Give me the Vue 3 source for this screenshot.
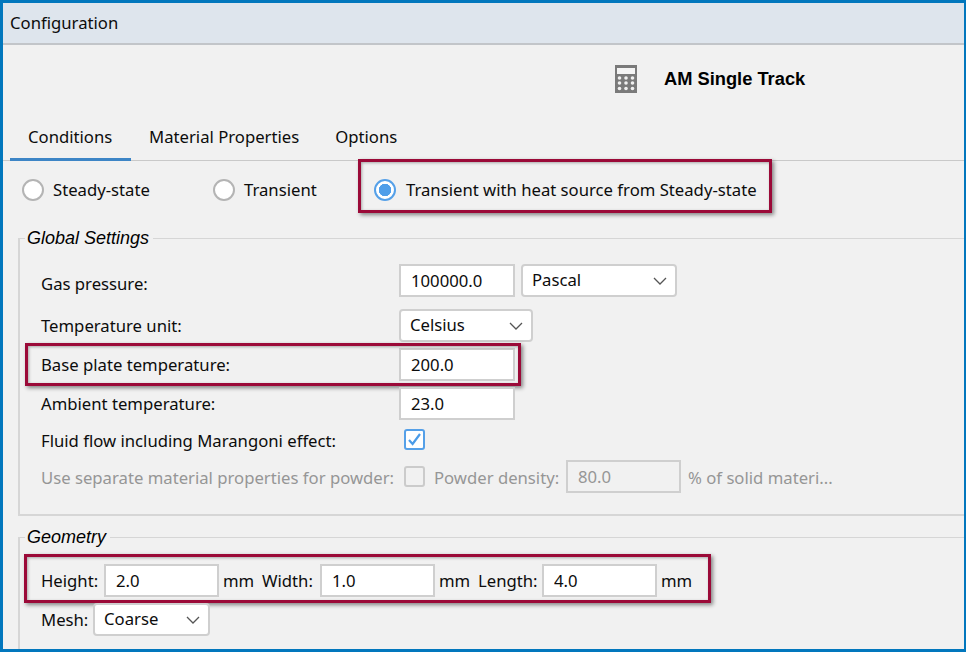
<script setup>
const tabs = ['Conditions', 'Material Properties', 'Options']
const radios = [
  { label: 'Steady-state', width: 191, on: false },
  { label: 'Transient', width: 161, on: false },
  { label: 'Transient with heat source from Steady-state', width: 400, on: true },
]
</script>

<template>
  <div class="window">
    <header class="titlebar">Configuration</header>

    <div class="model">
      <svg class="calc" width="24" height="28" viewBox="0 0 24 28" aria-hidden="true">
        <rect x="1" y="0" width="22" height="28" fill="#7a7a7a" />
        <rect x="3" y="3" width="18" height="6" fill="#f4f4f4" />
        <g fill="#f0f0f0">
          <circle cx="5.5" cy="13" r="1.8" /><circle cx="12" cy="13" r="1.8" /><circle cx="18.5" cy="13" r="1.8" />
          <circle cx="5.5" cy="18" r="1.8" /><circle cx="12" cy="18" r="1.8" /><circle cx="18.5" cy="18" r="1.8" />
          <circle cx="5.5" cy="23.5" r="1.8" /><circle cx="12" cy="23.5" r="1.8" /><circle cx="18.5" cy="23.5" r="1.8" />
        </g>
      </svg>
      <span class="model-name">AM Single Track</span>
    </div>

    <nav class="tabs">
      <div v-for="(t, i) in tabs" :key="t" class="tab" :class="{ active: i === 0 }">{{ t }}</div>
    </nav>

    <div class="radios">
      <label v-for="r in radios" :key="r.label" class="radio-item" :class="{ chosen: r.on }" :style="{ width: r.width + 'px' }">
        <span class="radio" :class="{ on: r.on }"></span>
        <span>{{ r.label }}</span>
      </label>
      <div class="mark mark-mode"></div>
    </div>

    <fieldset class="group">
      <legend>Global Settings</legend>
      <div class="row">
        <span class="label lowest">Gas pressure:</span>
        <input class="field" value="100000.0" readonly />
        <div class="select pascal">Pascal
          <svg class="chev" width="14" height="8" viewBox="0 0 14 8"><path d="M1 1l6 6 6-6" fill="none" stroke="#555" stroke-width="1.3" /></svg>
        </div>
      </div>
      <div class="row gap12">
        <span class="label">Temperature unit:</span>
        <div class="select celsius">Celsius
          <svg class="chev" width="14" height="8" viewBox="0 0 14 8"><path d="M1 1l6 6 6-6" fill="none" stroke="#555" stroke-width="1.3" /></svg>
        </div>
      </div>
      <div class="row gap6 base-row">
        <span class="label">Base plate temperature:</span>
        <input class="field" value="200.0" readonly />
        <div class="mark mark-base"></div>
      </div>
      <div class="row gap6">
        <span class="label">Ambient temperature:</span>
        <input class="field" value="23.0" readonly />
      </div>
      <div class="row gap3">
        <span class="label low">Fluid flow including Marangoni effect:</span>
        <span class="check on">
          <svg width="15" height="15" viewBox="0 0 15 15"><path d="M2 8l3.6 4L13 2" fill="none" stroke="#4a9be8" stroke-width="2.2" /></svg>
        </span>
      </div>
      <div class="row gap4 disabled">
        <span class="label low">Use separate material properties for powder:</span>
        <span class="check"></span>
        <span class="density">Powder density:</span>
        <input class="field off" value="80.0" readonly disabled />
        <span class="solid">% of solid materi...</span>
      </div>
    </fieldset>

    <fieldset class="group geometry">
      <legend>Geometry</legend>
      <div class="row dims">
        <span class="dim-label d-height">Height:</span>
        <input class="field" value="2.0" readonly />
        <span class="unit">mm</span>
        <span class="dim-label d-width">Width:</span>
        <input class="field" value="1.0" readonly />
        <span class="unit">mm</span>
        <span class="dim-label d-length">Length:</span>
        <input class="field" value="4.0" readonly />
        <span class="unit">mm</span>
        <div class="mark mark-dims"></div>
      </div>
      <div class="row gap6">
        <span class="mesh-label">Mesh:</span>
        <div class="select coarse">Coarse
          <svg class="chev" width="14" height="8" viewBox="0 0 14 8"><path d="M1 1l6 6 6-6" fill="none" stroke="#555" stroke-width="1.3" /></svg>
        </div>
      </div>
    </fieldset>
  </div>
</template>

<style>
html, body { margin: 0; overflow: hidden; }
</style>

<style scoped>
.window {
  box-sizing: border-box;
  width: 966px;
  height: 652px;
  border: 3px solid #0277bd;
  border-right-width: 2px;
  background: #f1f1f1;
  overflow: hidden;
  font: 16.7px/20px "Noto Sans", sans-serif;
  color: #0c0c0c;
  position: relative;
}
.titlebar {
  box-sizing: border-box;
  height: 42px;
  padding: 10px 0 0 7px;
  background: #dee5ed;
  border-bottom: 2px solid #c2c5c9;
}
.model {
  height: 75px;
  display: flex;
  align-items: center;
  padding: 0 0 8px 611px;
  box-sizing: border-box;
}
.calc { margin-right: 26px; }
.model-name {
  font: bold 18.3px/20px "Liberation Sans", sans-serif;
  color: #000;
}
.tabs {
  display: flex;
  height: 41px;
  box-sizing: border-box;
  padding-left: 7px;
  border-bottom: 1px solid #c9c9c9;
}
.tab {
  padding: 7px 18px 0;
  height: 41px;
  box-sizing: border-box;
}
.tab.active { border-bottom: 3px solid #3d85c6; padding-right: 0; width: 121px; }
.radios {
  height: 67px;
  display: flex;
  align-items: flex-start;
  padding: 18px 0 0 19px;
  box-sizing: border-box;
  position: relative;
}
.radio-item { display: flex; align-items: center; gap: 9px; flex: none; height: 22px; }
.radio-item.chosen { gap: 10px; }
.radio {
  box-sizing: border-box;
  width: 22px;
  height: 22px;
  flex: none;
  border: 2px solid #b4b4b4;
  border-radius: 50%;
  background: #fff;
}
.radio.on {
  border-color: #55a0e8;
  background: radial-gradient(circle, #4f9ee9 0 6px, #fff 6.5px);
}
.group {
  margin: 0 -12px 0 15px;
  padding: 16px 0 21px 21px;
  border: 2px solid #d6d6d6;
  border-width: 1.5px 0 2px 2px;
  border-right: 0;
  min-width: 0;
}
.group legend {
  font: italic 18px/20px "Liberation Sans", sans-serif;
  padding: 0 4px 0 2px;
  margin-left: -16px;
  color: #000;
}
.geometry { margin-top: 11px; padding-top: 17px; padding-bottom: 60px; }
.row { display: flex; align-items: center; height: 33px; position: relative; }
.gap12 { margin-top: 12px; }
.gap6 { margin-top: 6px; }
.gap3 { margin-top: 3px; }
.gap4 { margin-top: 4px; }
.label { width: 358px; flex: none; white-space: nowrap; }
.label.low { padding-top: 2px; }
.label.lowest { padding-top: 6px; }
.field {
  box-sizing: border-box;
  width: 116px;
  height: 33px;
  padding: 0 10px;
  border: 2px solid #cfcfcf;
  border-radius: 0;
  background: #fff;
  font: inherit;
  color: inherit;
  outline: none;
  flex: none;
}
.dims .field { width: 115px; }
.select {
  box-sizing: border-box;
  height: 33px;
  padding: 0 0 2px 9px;
  border: 2px solid #cfcfcf;
  border-radius: 4px;
  background: #fff;
  display: flex;
  align-items: center;
  position: relative;
  flex: none;
}
.chev { position: absolute; right: 8px; top: 11px; }
.pascal { width: 156px; margin-left: 6px; }
.celsius { width: 134px; }
.coarse { width: 117px; margin-left: 5px; }
.check {
  box-sizing: border-box;
  width: 21px;
  height: 21px;
  margin-left: 5px;
  border: 2px solid #cbcbcb;
  border-radius: 3px;
  background: #f1f1f1;
  display: flex;
  align-items: center;
  justify-content: center;
  flex: none;
}
.check.on { border-color: #55a0e8; background: #fff; }
.disabled { color: #969696; }
.density { margin-left: 9px; padding-top: 3px; width: 132px; flex: none; white-space: nowrap; }
.field.off { background: #f1f1f1; color: #969696; width: 115px; }
.solid { margin-left: 7px; padding-top: 3px; white-space: nowrap; }
.dim-label { flex: none; white-space: nowrap; }
.d-height { width: 63px; }
.d-width { width: 58px; }
.d-length { width: 64px; }
.unit { width: 39px; margin-left: 4px; flex: none; }
.mesh-label { width: 47px; flex: none; }
.mark {
  position: absolute;
  box-sizing: border-box;
  border: 3px solid #9b0a38;
  box-shadow: 2px 2px 4px rgba(0, 0, 0, .45), inset 1px 1px 3px rgba(0, 0, 0, .3);
  pointer-events: none;
}
.mark-mode { left: 355px; top: -2px; width: 414px; height: 54px; }
.mark-base { left: -16px; top: -5px; width: 496px; height: 43px; }
.mark-dims { left: -17px; top: -10px; width: 687px; height: 49px; }
</style>
